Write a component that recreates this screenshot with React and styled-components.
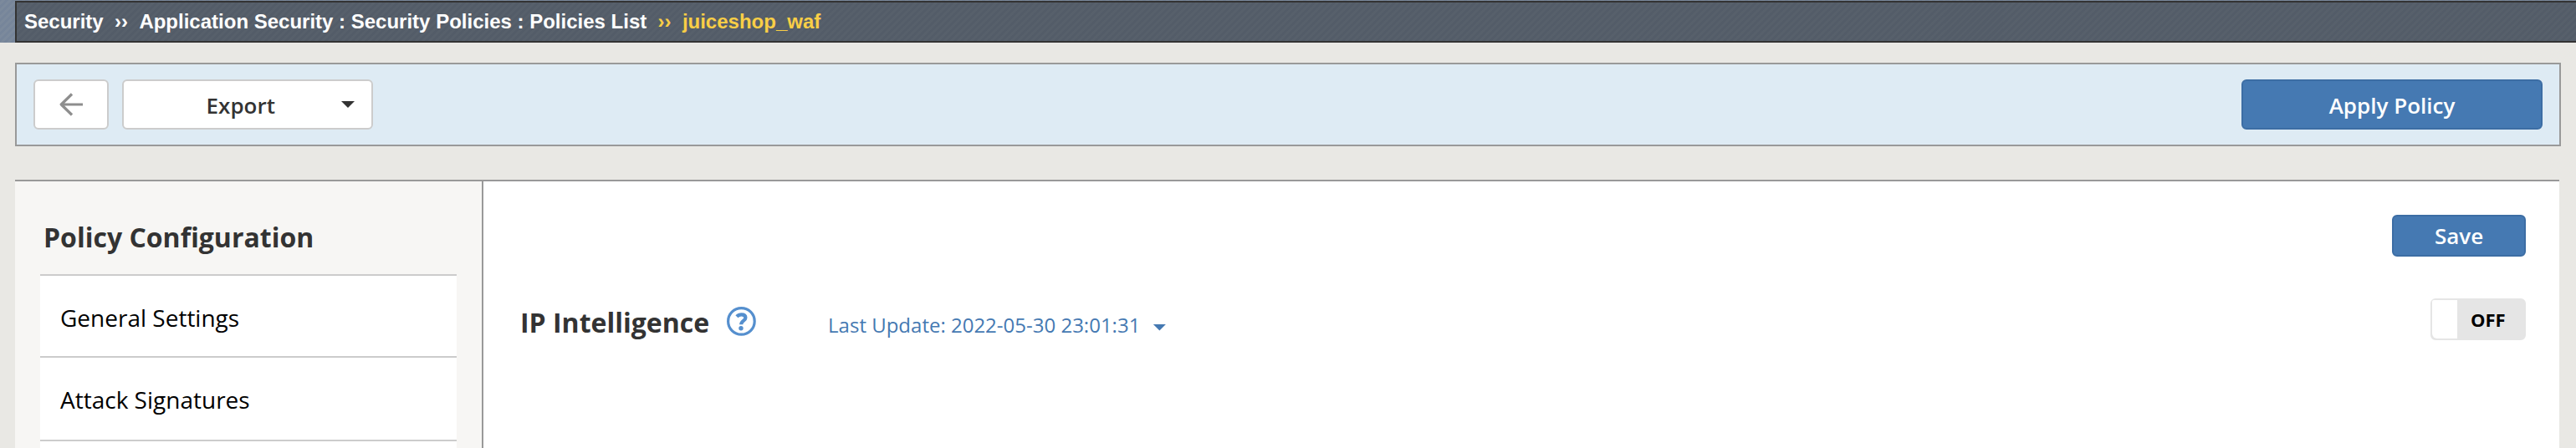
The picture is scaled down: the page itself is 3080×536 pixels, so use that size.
import React from "react";
import styled, { createGlobalStyle } from "styled-components";

const GlobalStyle = createGlobalStyle`
  *, *::before, *::after { box-sizing: border-box; }
  body {
    margin: 0;
    background: #e9e8e4;
    font-family: "Open Sans", sans-serif;
    color: #333;
    overflow: hidden;
  }
  button { font-family: inherit; }
`;

const Page = styled.div`
  display: flex;
  flex-direction: column;
  height: 536px;
  overflow: hidden;
`;

const Header = styled.header`
  flex: none;
  height: 51px;
  padding: 1px 0 0 18px;
  background: repeating-linear-gradient(-45deg, #76859a 0 2.83px, #7c8a9c 2.83px 5.657px);
`;

const Breadcrumb = styled.nav`
  height: 50px;
  padding-left: 9px;
  border: 2px solid #333;
  border-right: 0;
  background: repeating-linear-gradient(-45deg, #535c68 0 2.83px, #57606b 2.83px 5.657px);
  font: bold 24px/46px "Liberation Sans", Arial, sans-serif;
  color: #fff;
  white-space: pre;
`;

const Current = styled.span`
  color: #f9ce46;
`;

const Toolbar = styled.div`
  flex: none;
  display: flex;
  align-items: center;
  gap: 16px;
  height: 100px;
  margin: 24px 18px 0;
  padding: 0 20px;
  border: 2px solid #999;
  background: #deebf4;
`;

const Button = styled.button`
  display: flex;
  align-items: center;
  justify-content: center;
  width: ${(p) => p.$width}px;
  height: ${(p) => p.$height || 60}px;
  padding: 0;
  border: 2px solid ${(p) => (p.$primary ? "#3c6da4" : "#ccc")};
  border-radius: 6px;
  background: ${(p) => (p.$primary ? "#4579b2" : "#fff")};
  color: ${(p) => (p.$primary ? "#fff" : "#333")};
  font-size: 26px;
  font-weight: 600;
  line-height: 36px;
`;

const ToolbarLabel = styled.span`
  padding-top: 2px;
`;

const ExportButton = styled(Button)`
  justify-content: flex-end;
  padding-right: 20px;
  gap: 79px;
`;

const Spacer = styled.div`
  flex: 1;
`;

const Caret = styled.span`
  width: 16px;
  height: 8px;
  margin-top: ${(p) => p.$drop || 0}px;
  background: currentColor;
  clip-path: polygon(0 0, 100% 0, 50% 100%);
`;

const Panel = styled.main`
  flex: 1;
  display: flex;
  margin: 40px 20px 0 18px;
  border-top: 2px solid #999;
  background: #fff;
`;

const Sidebar = styled.aside`
  width: 560px;
  padding: 45px 30px 0;
  border-right: 2px solid #999;
  background: #f7f6f4;
`;

const SidebarTitle = styled.h2`
  margin: 0;
  padding-left: 4px;
  height: 66px;
  font-size: 32px;
  font-weight: 700;
  line-height: 44px;
`;

const Menu = styled.ul`
  margin: 0;
  padding: 0;
  list-style: none;
`;

const MenuItem = styled.li`
  height: ${(p) => p.$height}px;
  padding: 30px 24px 0;
  border-top: 2px solid #ccc;
  background: #fff;
  color: #000;
  font-size: 28px;
  line-height: 40px;
`;

const Content = styled.section`
  flex: 1;
  display: flex;
  flex-direction: column;
  padding: 40px 40px 0 44px;
`;

const Actions = styled.div`
  display: flex;
  justify-content: flex-end;
`;

const SettingRow = styled.div`
  display: flex;
  align-items: center;
  height: 50px;
  margin-top: 50px;
`;

const SettingTitle = styled.h1`
  margin: 0;
  padding-top: 7px;
  font-size: 32px;
  font-weight: 700;
  line-height: 44px;
`;

const HelpIcon = styled.svg`
  width: 35px;
  height: 35px;
  margin: 5px 86px 0 21px;
`;

const UpdateLink = styled.a`
  display: flex;
  align-items: center;
  gap: 15px;
  padding-top: 13px;
  color: #4579b2;
  font-size: 24px;
  line-height: 34px;
`;

const Toggle = styled.div`
  display: flex;
  width: 114px;
  height: 50px;
  border: 2px solid #e5e5e5;
  border-radius: 6px;
  background: #e5e5e5;
`;

const Knob = styled.span`
  width: 30px;
  border-radius: 2px 0 0 6px;
  background: #fff;
`;

const ToggleLabel = styled.span`
  padding-left: 16px;
  color: #000;
  font-size: 22px;
  font-weight: 700;
  line-height: 46px;
`;

const SEP = "\u00a0\u00a0››\u00a0\u00a0";

export default function App() {
  return (
    <Page>
      <GlobalStyle />
      <Header>
        <Breadcrumb>
          Security{SEP}Application Security : Security Policies : Policies List
          <Current>{SEP}juiceshop_waf</Current>
        </Breadcrumb>
      </Header>
      <Toolbar>
        <Button $width={90} aria-label="Back">
          <svg width="28" height="28" viewBox="0 0 28 28" fill="none" stroke="#8e8e8e" strokeWidth="3.2">
            <path d="M2 14H28M15 1.5L2.2 14l12.8 12.5" strokeLinejoin="round" />
          </svg>
        </Button>
        <ExportButton $width={300}>
          <ToolbarLabel>Export</ToolbarLabel>
          <Caret />
        </ExportButton>
        <Spacer />
        <Button $width={360} $primary>
          <ToolbarLabel>Apply Policy</ToolbarLabel>
        </Button>
      </Toolbar>
      <Panel>
        <Sidebar>
          <SidebarTitle>Policy Configuration</SidebarTitle>
          <Menu>
            <MenuItem $height={98}>General Settings</MenuItem>
            <MenuItem $height={100}>Attack Signatures</MenuItem>
            <MenuItem $height={98} />
          </Menu>
        </Sidebar>
        <Content>
          <Actions>
            <Button $width={160} $height={50} $primary>Save</Button>
          </Actions>
          <SettingRow>
            <SettingTitle>IP Intelligence</SettingTitle>
            <HelpIcon viewBox="0 0 35 35" fill="none" stroke="#558fce">
              <circle cx="17.4" cy="17.4" r="15.8" strokeWidth="3.2" />
              <path d="M11.9 11.8C13.4 10.2 15.2 9.4 17.5 9.4C20.6 9.4 22.4 10.9 22.4 13.2C22.4 16.8 17.2 16.6 17.2 21.2" strokeWidth="4.2" />
              <circle cx="17" cy="25.7" r="2.7" fill="#558fce" stroke="none" />
            </HelpIcon>
            <UpdateLink>
              <span>Last Update: 2022-05-30 23:01:31</span>
              <Caret $drop={6} />
            </UpdateLink>
            <Spacer />
            <Toggle>
              <Knob />
              <ToggleLabel>OFF</ToggleLabel>
            </Toggle>
          </SettingRow>
        </Content>
      </Panel>
    </Page>
  );
}
